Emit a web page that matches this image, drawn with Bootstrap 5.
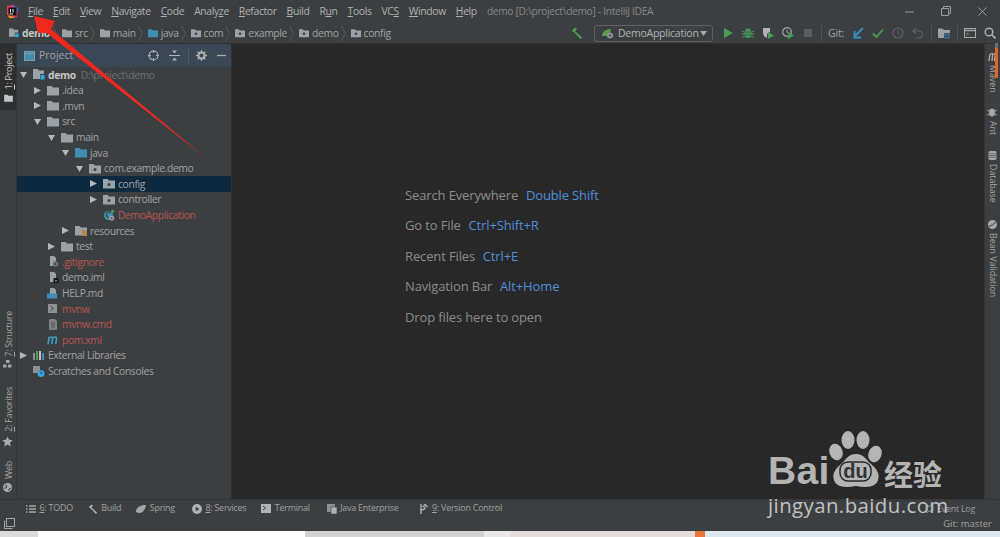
<!DOCTYPE html>
<html lang="en">
<head>
<meta charset="utf-8">
<title>demo - IntelliJ IDEA</title>
<link href="https://cdn.jsdelivr.net/npm/bootstrap@5.3.0/dist/css/bootstrap.min.css" rel="stylesheet">
<style>
html,body{width:1000px;height:537px;overflow:hidden;background:#3c3f41}
body{font-family:"Open Sans","Noto Sans",sans-serif;color:#a0a3a5;font-size:10.5px;line-height:1.2}
.ide-shell{width:1000px;height:537px;position:relative}
.title-row{height:22px;background:#3c3f41;padding-left:6px;flex:none}
.app-logo{width:13px;height:13px;margin-right:9px}
.menu-list{gap:10px;font-size:10.4px;color:#aeb1b3;letter-spacing:-.37px}
.win-title{margin-left:10px;font-size:10.2px;color:#85888a;letter-spacing:-.3px}
.win-btns{gap:27px;padding-right:13px}
.nav-row{height:22px;background:#3c3f41;border-bottom:1px solid #323232;flex:none;padding-top:1px}
.crumbs{padding-left:9px;font-size:10.3px;letter-spacing:-.33px}
.crumbs svg{width:10px;height:10px;margin-right:3px}
.crumbs .crumb-sep{width:5px;height:15px;margin:0 5px 0 2px}
.crumbs b{color:#c5c7c8}
.tools-right{padding-right:4px}
.tools-right>*{flex:none}
.run-combo{width:119px;height:17px;border:1px solid #5e6264;border-radius:3px;margin:0 9px;padding:0 5px 0 6px;font-size:10.5px;color:#b0b3b5;letter-spacing:-.25px}
.tool-ico{width:12px;height:12px;margin-right:8px}
.hammer-ico{margin-left:-2px;margin-right:2px}
.tool-div{width:1px;height:16px;background:#4e5254;margin:0 6px 0 -1px}
.git-lbl{font-size:10.5px;margin-right:8px;width:16px;letter-spacing:-.2px}
.work-row{height:455px;flex:none}
.left-rail{width:17px;background:#3c3f41;border-right:1px solid #333638;flex:none;padding-bottom:7px}
.right-rail{width:16px;background:#3c3f41;border-left:1px solid #333638;flex:none;padding-top:8px;font-size:8.8px}
.rail-tab{height:66px;background:#2c2e2f;padding-top:9px;color:#c8cacb}
.v-up{writing-mode:vertical-rl;transform:rotate(180deg);font-size:9px;white-space:nowrap;letter-spacing:-.27px;margin-left:3px}
.v-down{writing-mode:vertical-rl;font-size:8.8px;white-space:nowrap}
.rail-group{gap:4px}
.mt-fav{margin-top:19px}
.mt-web{margin-top:14px}
.mt-ant{margin-top:15px}
.mt-db{margin-top:16px}
.mt-bean{margin-top:18px}
.project-pane{width:215px;background:#3c3f41;border-right:1px solid #323232;flex:none}
.pane-head{height:23px;background:#3a4755;padding:0 5px 0 7px;font-size:10.5px;flex:none}
.pane-head svg{flex:none}
.hi-10{margin-right:10px}
.hi-8{margin-right:8px}
.hi-7{margin-right:7px}
.pane-div{width:1px;height:14px;background:#4e5a68}
.tree-row{height:15.6px;padding-left:3px;font-size:10.3px;white-space:nowrap;letter-spacing:-.35px}
.dp1{padding-left:17px}
.dp2{padding-left:31px}
.dp3{padding-left:45px}
.dp4{padding-left:59px}
.dp5{padding-left:73px}
.tw{width:7px;height:7px;margin-right:6px;flex:none}
.tw-none{width:7px;margin-right:6px;flex:none}
.ti{width:12px;height:11px;margin-right:3px;flex:none}
.tree-sel{background:#0d293e}
.tree-row b{color:#c5c7c8}
.path-hint{color:#6d7072;margin-left:5px}
.vcs-red{color:#bd5450}
.editor-pane{background:#282828;padding-left:173px;padding-top:143.5px;font-size:13px}
.hint-row{height:30.5px;color:#8c8c8c;letter-spacing:-.13px}
.hint-key{color:#4f8fdc;margin-left:4.5px}
.tool-strip{height:17px;background:#3c3f41;border-top:1px solid #333638;font-size:8.9px;padding:1px 0 0 26px;flex:none;letter-spacing:-.22px}
.strip-item{margin-right:15px}
.strip-item.gap17{margin-right:17px}
.strip-item.gap20{margin-right:20px}
.strip-item svg{width:10px;height:10px;margin-right:3.5px}
.event-log{position:absolute;left:925px;top:504px;font-size:8.9px;color:#9a9d9f;letter-spacing:-.22px}
.event-log svg{margin-right:3px}
.status-strip{height:15px;background:#3c3f41;padding:0 8px 0 4px;font-size:9.5px;flex:none}
.os-strip{height:6px;background:#dcdcdc;flex:none}
.os-white{width:267px;margin-left:38px;background:#fff}
.os-mid{width:179px;background:#d2d2d2}
.os-pale{width:26px;background:#e8e8e8}
.os-light{width:185px;background:#e4dddc}
.os-orange{width:10px;background:#e8743b}
.os-sky{background:#dce8ee}
.red-arrow{position:absolute;left:0;top:0;width:260px;height:200px;pointer-events:none}
.scroll-thumb{position:absolute;left:995px;top:43px;width:3px;height:35px;background:#e0632b;border-top:5px solid #6b6e70}
.wm-bai{position:absolute;left:768px;top:448px;font:700 39px/46px "Liberation Sans",sans-serif;color:#b4b4b4;letter-spacing:.3px}
.wm-paw{position:absolute;left:829px;top:430px;width:54px;height:60px}
.wm-cn{position:absolute;left:884px;top:454px;font:700 29px/38px "Noto Sans CJK SC",sans-serif;color:#b4b4b4}
.wm-url{position:absolute;left:768px;top:490px;font:400 20.4px/30px "Open Sans",sans-serif;color:#c2c2c2;letter-spacing:.42px}
</style>
</head>
<body>
<svg width="0" height="0" class="position-absolute">
<defs>
<symbol id="fd" viewBox="0 0 12 11"><path d="M0 1h4.500l1.500 1.500h6V10.500H0z" fill="#9aa2a7"/></symbol>
<symbol id="fb" viewBox="0 0 12 11"><path d="M0 1h4.500l1.500 1.500h6V10.500H0z" fill="#3f8fb3"/></symbol>
<symbol id="fp" viewBox="0 0 12 11"><path d="M0 1h4.500l1.500 1.500h6V10.500H0z" fill="#9aa2a7"/><rect x="4.500" y="5" width="3" height="3" rx="1.500" fill="#3c3f41"/></symbol>
<symbol id="fm" viewBox="0 0 12 11"><path d="M0 0h4.500l1.500 1.500h5V10H0z" fill="#9aa2a7"/><rect x="7" y="5" width="5" height="6" fill="#3c3f41"/><rect x="7.500" y="6" width="4" height="4.500" fill="#2ea7e0"/></symbol>
<symbol id="ar" viewBox="0 0 7 7"><path d="M0 0l7 3.500-7 3.500z" fill="#b5b8ba"/></symbol>
<symbol id="ad" viewBox="0 0 7 7"><path d="M0 1h7l-3.500 6z" fill="#b5b8ba"/></symbol>
<symbol id="sp" viewBox="0 0 5 15"><path d="M.5 0l4 7.500-4 7.500" fill="none" stroke="#555a5c"/></symbol>
<symbol id="doc" viewBox="0 0 12 11"><path d="M3 0h4l2 2v4H8v4H3z" fill="#9aa2a7"/></symbol>
</defs>
</svg>

<div class="ide-shell d-flex flex-column">
  <div class="title-row d-flex align-items-center">
    <svg class="app-logo" viewBox="0 0 13 13"><path d="M1 1l6-1 5 4-1 8-8 1-2-5z" fill="#e23a6f"/><path d="M7 0l5 3-1 5z" fill="#2b7ddc"/><path d="M1 8l2 5 6 0z" fill="#f58a1f"/><rect x="2.500" y="2.500" width="8" height="8" fill="#0d0d0d"/><rect x="3.500" y="8.500" width="3.500" height="1" fill="#fff"/><rect x="4" y="4" width="1" height="3.500" fill="#fff"/><rect x="6.500" y="4" width="1" height="3.500" fill="#fff"/></svg>
    <div class="menu-list d-flex">
      <span><u>F</u>ile</span><span><u>E</u>dit</span><span><u>V</u>iew</span><span><u>N</u>avigate</span><span><u>C</u>ode</span><span>Analy<u>z</u>e</span><span><u>R</u>efactor</span><span><u>B</u>uild</span><span>R<u>u</u>n</span><span><u>T</u>ools</span><span>VC<u>S</u></span><span><u>W</u>indow</span><span><u>H</u>elp</span>
    </div>
    <span class="win-title">demo [D:\project\demo] - IntelliJ IDEA</span>
    <div class="win-btns d-flex align-items-center ms-auto">
      <svg width="9" height="9" viewBox="0 0 9 9"><path d="M0 5h9" stroke="#9a9d9f"/></svg>
      <svg width="10" height="10" viewBox="0 0 10 10"><path d="M.5 2.500h7v7h-7zM2.500 2.500v-2h7v7h-2" fill="none" stroke="#9a9d9f"/></svg>
      <svg width="9" height="9" viewBox="0 0 9 9"><path d="M.5.500l8 8M8.500.500l-8 8" stroke="#9a9d9f"/></svg>
    </div>
  </div>

  <div class="nav-row d-flex align-items-center justify-content-between">
    <div class="crumbs d-flex align-items-center">
      <svg><use href="#fm"/></svg><b>demo</b><svg class="crumb-sep"><use href="#sp"/></svg>
      <svg><use href="#fd"/></svg><span>src</span><svg class="crumb-sep"><use href="#sp"/></svg>
      <svg><use href="#fd"/></svg><span>main</span><svg class="crumb-sep"><use href="#sp"/></svg>
      <svg><use href="#fb"/></svg><span>java</span><svg class="crumb-sep"><use href="#sp"/></svg>
      <svg><use href="#fp"/></svg><span>com</span><svg class="crumb-sep"><use href="#sp"/></svg>
      <svg><use href="#fp"/></svg><span>example</span><svg class="crumb-sep"><use href="#sp"/></svg>
      <svg><use href="#fp"/></svg><span>demo</span><svg class="crumb-sep"><use href="#sp"/></svg>
      <svg><use href="#fp"/></svg><span>config</span>
    </div>
    <div class="tools-right d-flex align-items-center">
      <svg class="tool-ico hammer-ico" viewBox="0 0 12 12"><path d="M1 3.500L4.500.500 6 2 4 4l7 6.500-1.500 1.500L3 5 2 5z" fill="#4ea24c"/></svg>
      <div class="run-combo d-flex align-items-center">
        <svg width="13" height="12" viewBox="0 0 13 12" class="me-1 flex-none"><path d="M1 9c0-5 5-7 9-7-1 5-3 7-6 7z" fill="#5a9e4a"/><circle cx="9" cy="8.500" r="3" fill="#8d9194"/><circle cx="9" cy="8.500" r="1" fill="#3c3f41"/></svg>
        <span>DemoApplication</span>
        <svg width="7" height="5" viewBox="0 0 7 5" class="ms-auto"><path d="M0 0h7L3.500 5z" fill="#a4a7a9"/></svg>
      </div>
      <svg class="tool-ico" viewBox="0 0 12 12"><path d="M2 1l9 5-9 5z" fill="#499c54"/></svg>
      <svg class="tool-ico" viewBox="0 0 12 12"><ellipse cx="6" cy="6.500" rx="3.500" ry="4.500" fill="#499c54"/><path d="M4 1l2 2 2-2M0 4l3 1.500M12 4L9 5.500M0 7h3M12 7H9M0 10.500l3-1.500M12 10.500L9 9" stroke="#499c54" fill="none"/><path d="M2.500 5h7M2.500 8h7" stroke="#3c3f41" stroke-width=".7"/></svg>
      <svg class="tool-ico" viewBox="0 0 12 12"><path d="M1 1h7v4L5 7v4C2 10 1 8 1 5z" fill="#b0b3b5"/><path d="M6 5l6 3.500L6 12z" fill="#499c54"/></svg>
      <svg class="tool-ico" viewBox="0 0 12 12"><circle cx="5" cy="5" r="4.300" fill="none" stroke="#a4a7a9" stroke-width="1.200"/><path d="M5 2.500V5l1.500 1.500" fill="none" stroke="#a4a7a9"/><path d="M6 5l6 3.500L6 12z" fill="#499c54"/></svg>
      <svg class="tool-ico" viewBox="0 0 12 12"><rect x="2" y="2" width="8" height="8" fill="#5a5d5f"/></svg>
      <div class="tool-div"></div>
      <span class="git-lbl">Git:</span>
      <svg class="tool-ico" viewBox="0 0 12 12"><path d="M11 1L3.500 8.500M2.500 4v6.500H9" fill="none" stroke="#3592c4" stroke-width="1.800"/></svg>
      <svg class="tool-ico" viewBox="0 0 12 12"><path d="M1 6.500l3.500 3.500L11 2.500" fill="none" stroke="#499c54" stroke-width="1.800"/></svg>
      <svg class="tool-ico" viewBox="0 0 12 12"><circle cx="6" cy="6" r="5" fill="none" stroke="#5f6264" stroke-width="1.200"/><path d="M6 3v3l2 1.500" fill="none" stroke="#5f6264"/></svg>
      <svg class="tool-ico" viewBox="0 0 12 12"><path d="M4 1L1 4l3 3M1 4h6a3.500 3.500 0 0 1 0 7H4" fill="none" stroke="#5f6264" stroke-width="1.200"/></svg>
      <div class="tool-div"></div>
      <svg class="tool-ico" viewBox="0 0 12 12"><use href="#fd"/><rect x="6" y="6" width="6" height="6" fill="#3c3f41"/><rect x="6.500" y="6.500" width="2" height="2" fill="#3d86c6"/><rect x="9.500" y="6.500" width="2" height="2" fill="#3d86c6"/><rect x="6.500" y="9.500" width="2" height="2" fill="#3d86c6"/><rect x="9.500" y="9.500" width="2" height="2" fill="#3d86c6"/></svg>
      <div class="tool-div"></div>
      <svg class="tool-ico" viewBox="0 0 12 12"><rect x=".5" y="1.500" width="11" height="9" fill="none" stroke="#a4a7a9"/><path d="M.5 3.500h11" stroke="#a4a7a9" stroke-width="1.500"/><path d="M2.500 5.500l3 1.500-3 1.500z" fill="#499c54"/></svg>
      <svg class="tool-ico m-0" viewBox="0 0 12 12"><circle cx="5" cy="5" r="3.800" fill="none" stroke="#b0b3b5" stroke-width="1.400"/><path d="M7.800 7.800L11.500 11.500" stroke="#b0b3b5" stroke-width="1.600"/></svg>
    </div>
  </div>

  <div class="work-row d-flex">
    <div class="left-rail d-flex flex-column align-items-center">
      <div class="rail-tab w-100 d-flex flex-column align-items-center rail-group">
        <span class="v-up"><u>1</u>: Project</span>
        <svg width="9" height="8" viewBox="0 0 12 11"><path d="M0 1h4.500l1.500 1.500h6V10.500H0z" fill="#c0c2c3"/></svg>
      </div>
      <div class="d-flex flex-column align-items-center rail-group mt-auto">
        <span class="v-up"><u>7</u>: Structure</span>
        <svg width="9" height="8" viewBox="0 0 9 8"><rect x="3" width="3.500" height="3" fill="#a4a7a9"/><rect y="4.500" width="3.500" height="3" fill="#a4a7a9"/><rect x="5" y="4.500" width="3.500" height="3" fill="#a4a7a9"/></svg>
      </div>
      <div class="d-flex flex-column align-items-center rail-group mt-fav">
        <span class="v-up"><u>2</u>: Favorites</span>
        <svg width="11" height="11" viewBox="0 0 24 24"><path d="M12 1l3.400 7.400 8 .9-6 5.400 1.700 8L12 18.700l-7.100 4 1.700-8-6-5.400 8-.9z" fill="#a9acae"/></svg>
      </div>
      <div class="d-flex flex-column align-items-center rail-group mt-web">
        <span class="v-up">Web</span>
        <svg width="9" height="9" viewBox="0 0 9 9"><circle cx="4.500" cy="4.500" r="4.500" fill="#a9acae"/><path d="M2 1.500l2 1.500-1 2-2 0M6 8l0-2 2-1" fill="none" stroke="#3c3f41"/></svg>
      </div>
    </div>

    <div class="project-pane d-flex flex-column">
      <div class="pane-head d-flex align-items-center">
        <svg width="11" height="10" viewBox="0 0 11 10" class="me-1"><rect x=".5" y=".5" width="10" height="9" fill="#3f8fb3" stroke="#8a98a5"/><path d="M.5 2.500h10" stroke="#8a98a5"/></svg>
        <span>Project</span>
        <div class="d-flex align-items-center ms-auto">
          <svg class="hi-10" width="11" height="11" viewBox="0 0 11 11"><circle cx="5.500" cy="5.500" r="4.500" fill="none" stroke="#aeb1b3" stroke-width="1.200"/><path d="M5.500 0v3M5.500 8v3M0 5.500h3M8 5.500h3" stroke="#aeb1b3"/></svg>
          <svg class="hi-8" width="11" height="11" viewBox="0 0 11 11"><path d="M0 5.500h11" stroke="#aeb1b3"/><path d="M3 .5h5L5.500 3.500zM3 10.500h5L5.500 7.500z" fill="#aeb1b3"/></svg>
          <span class="pane-div hi-7"></span>
          <svg class="hi-10" width="11" height="11" viewBox="0 0 11 11"><circle cx="5.500" cy="5.500" r="3" fill="none" stroke="#aeb1b3" stroke-width="2"/><path d="M5.500 0v2M5.500 9v2M0 5.500h2M9 5.500h2M1.600 1.600L3 3M8 8l1.400 1.400M1.600 9.400L3 8M8 3l1.400-1.400" stroke="#aeb1b3" stroke-width="1.300"/></svg>
          <svg width="9" height="9" viewBox="0 0 9 9"><path d="M0 4.500h9" stroke="#aeb1b3" stroke-width="1.300"/></svg>
        </div>
      </div>
      <div class="d-flex flex-column pt-0">
        <div class="tree-row d-flex align-items-center"><svg class="tw"><use href="#ad"/></svg><svg class="ti"><use href="#fm"/></svg><b>demo</b><span class="path-hint">D:\project\demo</span></div>
        <div class="tree-row dp1 d-flex align-items-center"><svg class="tw"><use href="#ar"/></svg><svg class="ti"><use href="#fd"/></svg><span>.idea</span></div>
        <div class="tree-row dp1 d-flex align-items-center"><svg class="tw"><use href="#ar"/></svg><svg class="ti"><use href="#fd"/></svg><span>.mvn</span></div>
        <div class="tree-row dp1 d-flex align-items-center"><svg class="tw"><use href="#ad"/></svg><svg class="ti"><use href="#fd"/></svg><span>src</span></div>
        <div class="tree-row dp2 d-flex align-items-center"><svg class="tw"><use href="#ad"/></svg><svg class="ti"><use href="#fd"/></svg><span>main</span></div>
        <div class="tree-row dp3 d-flex align-items-center"><svg class="tw"><use href="#ad"/></svg><svg class="ti"><use href="#fb"/></svg><span>java</span></div>
        <div class="tree-row dp4 d-flex align-items-center"><svg class="tw"><use href="#ad"/></svg><svg class="ti"><use href="#fp"/></svg><span>com.example.demo</span></div>
        <div class="tree-row dp5 tree-sel d-flex align-items-center"><svg class="tw"><use href="#ar"/></svg><svg class="ti"><use href="#fp"/></svg><span>config</span></div>
        <div class="tree-row dp5 d-flex align-items-center"><svg class="tw"><use href="#ar"/></svg><svg class="ti"><use href="#fp"/></svg><span>controller</span></div>
        <div class="tree-row dp5 d-flex align-items-center"><span class="tw-none"></span><svg class="ti" viewBox="0 0 12 12"><circle cx="5.500" cy="6" r="5" fill="#3f8fb3"/><path d="M8 3c-2-1.500-4-1-4.500 1s0 4 3 4" fill="none" stroke="#3c3f41" stroke-width="1.300"/><circle cx="9" cy="9" r="2.700" fill="#a4a7a9"/><circle cx="9" cy="9" r="1" fill="#3c3f41"/><path d="M8.500 0h3v3h-3z" fill="#499c54"/></svg><span class="vcs-red">DemoApplication</span></div>
        <div class="tree-row dp3 d-flex align-items-center"><svg class="tw"><use href="#ar"/></svg><svg class="ti" viewBox="0 0 12 11"><use href="#fd"/><rect x="7" y="5" width="5" height="6" fill="#b0864a"/></svg><span>resources</span></div>
        <div class="tree-row dp2 d-flex align-items-center"><svg class="tw"><use href="#ar"/></svg><svg class="ti"><use href="#fd"/></svg><span>test</span></div>
        <div class="tree-row dp1 d-flex align-items-center"><span class="tw-none"></span><svg class="ti" viewBox="0 0 12 11"><use href="#doc"/><circle cx="8.500" cy="8" r="2.800" fill="#3c3f41"/><circle cx="8.500" cy="8" r="2" fill="none" stroke="#9aa2a7"/></svg><span class="vcs-red">.gitignore</span></div>
        <div class="tree-row dp1 d-flex align-items-center"><span class="tw-none"></span><svg class="ti" viewBox="0 0 12 11"><use href="#doc"/><rect x="6.500" y="6" width="5" height="5" fill="#151515"/><rect x="8" y="8.500" width="2" height=".8" fill="#ddd"/></svg><span>demo.iml</span></div>
        <div class="tree-row dp1 d-flex align-items-center"><span class="tw-none"></span><svg class="ti" viewBox="0 0 12 11"><use href="#doc"/><rect x="0" y="5.500" width="10" height="5" fill="#3f8fb3"/></svg><span>HELP.md</span></div>
        <div class="tree-row dp1 d-flex align-items-center"><span class="tw-none"></span><svg class="ti" viewBox="0 0 12 11"><rect x="1" y="1" width="9" height="9" fill="#8d9194"/><path d="M3.500 3l3 2.500-3 2.500" fill="none" stroke="#3c3f41"/></svg><span class="vcs-red">mvnw</span></div>
        <div class="tree-row dp1 d-flex align-items-center"><span class="tw-none"></span><svg class="ti" viewBox="0 0 12 11"><path d="M3 0h5l2 2v9H2V1z" fill="#7c8083"/><path d="M4 4h4M4 6h4M4 8h4" stroke="#3c3f41" stroke-width=".7"/></svg><span class="vcs-red">mvnw.cmd</span></div>
        <div class="tree-row dp1 d-flex align-items-center"><span class="tw-none"></span><svg class="ti" viewBox="0 0 12 11"><path d="M1 10l1.200-7M1.800 4.500C3 2.500 6 2.500 5.500 5L4.800 10M5.500 4.500C7 2.500 10 2.500 9.500 5L8.800 10" fill="none" stroke="#3f9fc4" stroke-width="1.600"/></svg><span class="vcs-red">pom.xml</span></div>
        <div class="tree-row d-flex align-items-center"><svg class="tw"><use href="#ar"/></svg><svg class="ti" viewBox="0 0 12 11"><rect x="0" y="3" width="2" height="7" fill="#8d9194"/><rect x="3" y="1" width="2" height="9" fill="#5aa050"/><rect x="6" y="1" width="2" height="9" fill="#c0c2c3"/><rect x="9" y="3" width="2" height="7" fill="#3f8fb3"/></svg><span>External Libraries</span></div>
        <div class="tree-row d-flex align-items-center"><span class="tw-none"></span><svg class="ti" viewBox="0 0 12 11"><path d="M0 0h7v5H5v2H0z" fill="#8d9194"/><circle cx="8" cy="7.500" r="3.500" fill="#35a8e0"/><path d="M8 5.500v2h1.500" fill="none" stroke="#20303a" stroke-width=".7"/></svg><span>Scratches and Consoles</span></div>
      </div>
    </div>

    <div class="editor-pane flex-grow-1">
      <div class="hint-row">Search Everywhere <span class="hint-key">Double Shift</span></div>
      <div class="hint-row">Go to File <span class="hint-key">Ctrl+Shift+R</span></div>
      <div class="hint-row">Recent Files <span class="hint-key">Ctrl+E</span></div>
      <div class="hint-row">Navigation Bar <span class="hint-key">Alt+Home</span></div>
      <div class="hint-row">Drop files here to open</div>
    </div>

    <div class="right-rail d-flex flex-column align-items-center">
      <div class="d-flex flex-column align-items-center rail-group">
        <svg width="9" height="9" viewBox="0 0 9 9"><path d="M1 9l1-7M2 3c1-2 3-2 2.500 0L4 9M4.500 3c1-2 3-2 2.500 0L6.500 9" fill="none" stroke="#b0b3b5" stroke-width="1.200"/></svg>
        <span class="v-down">Maven</span>
      </div>
      <div class="d-flex flex-column align-items-center rail-group mt-ant">
        <svg width="10" height="9" viewBox="0 0 10 9"><ellipse cx="5" cy="4.500" rx="3" ry="4" fill="#a4a7a9"/><path d="M0 2l3 1.500M10 2L7 3.500M0 7l3-1.500M10 7L7 5.500" stroke="#a4a7a9"/></svg>
        <span class="v-down">Ant</span>
      </div>
      <div class="d-flex flex-column align-items-center rail-group mt-db">
        <svg width="9" height="9" viewBox="0 0 9 10"><rect width="9" height="10" rx="2" fill="#a4a7a9"/><path d="M0 3h9M0 5h9M0 7h9" stroke="#3c3f41" stroke-width=".6"/></svg>
        <span class="v-down">Database</span>
      </div>
      <div class="d-flex flex-column align-items-center rail-group mt-bean">
        <svg width="9" height="9" viewBox="0 0 9 9"><circle cx="4.500" cy="4.500" r="4.500" fill="#a4a7a9"/><path d="M1 6c3 0 4-2 7-4" fill="none" stroke="#3c3f41"/></svg>
        <span class="v-down">Bean Validation</span>
      </div>
    </div>
  </div>

  <div class="tool-strip d-flex align-items-center">
    <span class="strip-item d-flex align-items-center"><svg viewBox="0 0 10 10"><path d="M0 2h1.500M3 2h7M0 5h1.500M3 5h7M0 8h1.500M3 8h7" stroke="#a4a7a9" stroke-width="1.300"/></svg><span><u>6</u>: TODO</span></span>
    <span class="strip-item d-flex align-items-center"><svg viewBox="0 0 12 12"><path d="M1 3.500L4.500.5 6 2 4 4l7 6.500-1.500 1.500L3 5 2 5z" fill="#b0b3b5"/></svg><span>Build</span></span>
    <span class="strip-item gap17 d-flex align-items-center"><svg viewBox="0 0 10 10"><path d="M0 8c0-5 5-7 10-7-1 6-4 8-7 8z" fill="#a4a7a9"/></svg><span>Spring</span></span>
    <span class="strip-item d-flex align-items-center"><svg viewBox="0 0 10 10"><circle cx="5" cy="5" r="5" fill="#b0b3b5"/><path d="M3.700 2.800L7.500 5 3.700 7.200z" fill="#3c3f41"/></svg><span><u>8</u>: Services</span></span>
    <span class="strip-item gap17 d-flex align-items-center"><svg viewBox="0 0 10 10"><rect width="10" height="9" fill="#b0b3b5"/><path d="M2 2l2.500 2L2 6" fill="none" stroke="#3c3f41"/></svg><span>Terminal</span></span>
    <span class="strip-item gap20 d-flex align-items-center"><svg viewBox="0 0 10 10"><rect width="8" height="8" fill="#8d9194"/><rect x="4" y="3" width="6" height="7" fill="#b0b3b5" stroke="#3c3f41" stroke-width=".6"/></svg><span>Java Enterprise</span></span>
    <span class="strip-item d-flex align-items-center"><svg viewBox="0 0 10 10"><path d="M2 0v10M2 6c3 0 4-1 4-3M4 3l2-2.500L8.500 3" fill="none" stroke="#b0b3b5" stroke-width="1.400"/></svg><span><u>9</u>: Version Control</span></span>
  </div>
  <span class="event-log d-flex align-items-center"><svg width="9" height="9" viewBox="0 0 9 9"><path d="M1 1h7v5H4L2 8V6H1z" fill="none" stroke="#8d9194"/></svg>Event Log</span>
  <div class="status-strip d-flex align-items-center justify-content-between">
    <svg width="11" height="11" viewBox="0 0 11 11"><rect x="2.500" y=".5" width="8" height="8" fill="none" stroke="#a4a7a9"/><path d="M.5 2.500v8h8" fill="none" stroke="#a4a7a9"/></svg>
    <span>Git: master</span>
  </div>
  <div class="os-strip d-flex">
    <div class="os-white"></div>
    <div class="os-mid"></div>
    <div class="os-pale"></div>
    <div class="os-light"></div>
    <div class="os-orange"></div>
    <div class="os-sky flex-grow-1"></div>
  </div>

  <div class="scroll-thumb"></div>
  <svg class="red-arrow" viewBox="0 0 260 200"><path d="M34 16L55 21 51 29 207 159 47 33 38 33z" fill="#f0281e"/></svg>
  <span class="wm-bai">Bai</span>
  <svg class="wm-paw" viewBox="0 0 54 60"><g fill="#b4b4b4"><ellipse cx="7" cy="22" rx="6.500" ry="8.500" transform="rotate(-20 7 22)"/><ellipse cx="19" cy="10" rx="6.500" ry="9"/><ellipse cx="34" cy="10" rx="6.500" ry="9"/><ellipse cx="46" cy="24" rx="6.500" ry="8.500" transform="rotate(20 46 24)"/><path d="M27 24c8 0 10 6 15 10 6 5 9 10 7 16-2 7-10 8-22 6-12 2-20 1-22-6-2-6 1-11 7-16 5-4 7-10 15-10z"/></g><rect x="11" y="32" width="31" height="19" rx="8" fill="none" stroke="#282828" stroke-width="1.500"/><text x="26.500" y="48" text-anchor="middle" font-family="Liberation Sans, sans-serif" font-weight="700" font-size="20" fill="#333">du</text></svg>
  <span class="wm-cn">经验</span>
  <span class="wm-url">jingyan.baidu.com</span>
</div>
<script src="https://cdn.jsdelivr.net/npm/bootstrap@5.3.0/dist/js/bootstrap.bundle.min.js"></script>
</body>
</html>
